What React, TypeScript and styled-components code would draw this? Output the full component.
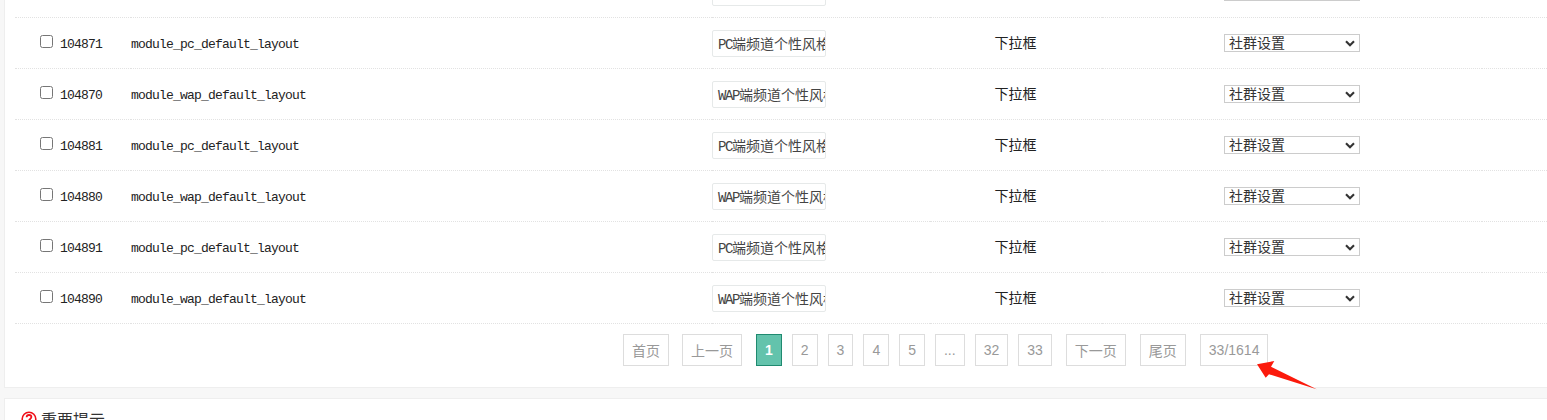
import React from "react";
import styled, { createGlobalStyle } from "styled-components";

const Global = createGlobalStyle`
  html, body { margin: 0; padding: 0; height: 420px; overflow: hidden; background: #f7f7f7; }
  * { box-sizing: border-box; }
`;

const Page = styled.div`
  position: relative;
  height: 420px;
  overflow: hidden;
  padding-left: 4px;
  font-family: "Liberation Sans", "Noto Sans CJK SC", sans-serif;
`;

const Panel = styled.section`
  margin-top: -33px;
  background: #fff;
  border: 1px solid #eeeeee;
  border-top: 0;
  border-right: 0;
  padding: 0 0 21px 10px;
`;

const Row = styled.div`
  display: grid;
  grid-template-columns: 116px 581px 218px 172px 380px 1fr;
  height: 51px;
`;

const Cell = styled.div<{ $center?: boolean }>`
  display: flex;
  align-items: center;
  justify-content: ${(p) => (p.$center ? "center" : "flex-start")};
  height: 51px;
  border-bottom: 1px dotted #e2e2e2;
`;

const IdCell = styled(Cell)`
  padding-left: 25px;
`;

const Check = styled.input`
  width: 13px;
  height: 13px;
  margin: -3px 7px 0 0;
`;

const Mono = styled.span`
  margin-top: 3px;
  font-family: "Liberation Mono", "Noto Sans CJK SC", monospace;
  font-size: 13px;
  letter-spacing: -0.8px;
  color: #222;
`;

const TitleField = styled.div`
  width: 114px;
  height: 27px;
  padding-left: 5px;
  overflow: hidden;
  white-space: nowrap;
  border: 1px solid #e6e9e9;
  border-radius: 2px;
  background: #fff;
  color: #444;
  font-family: "Noto Sans CJK SC", sans-serif;
  font-size: 14px;
  line-height: 24px;
`;

const TitleLatin = styled.span`
  font-family: "Liberation Mono", monospace;
  font-size: 14px;
  letter-spacing: -1.4px;
`;

const Kind = styled.span`
  margin-top: -3px;
  margin-left: -1px;
  font-family: "Noto Sans CJK SC", sans-serif;
  font-size: 14px;
  line-height: 18px;
  color: #222;
`;

const GroupBox = styled.div`
  display: flex;
  align-items: center;
  justify-content: space-between;
  width: 136px;
  height: 18px;
  padding: 0 4px 2px 4px;
  border: 1px solid #cccccc;
  background: #fff;
  color: #333;
  font-family: "Noto Sans CJK SC", sans-serif;
  font-size: 14px;
  line-height: 14px;
`;

const ChevronIcon = styled.svg`
  margin-top: 2px;
`;

const Pager = styled.nav`
  display: flex;
  gap: 10px;
  margin-top: 10px;
  padding-left: 608px;
`;

const PageLink = styled.a<{ $active?: boolean; $before?: number; $after?: number }>`
  display: flex;
  align-items: center;
  justify-content: center;
  height: 32px;
  padding: 0 8px;
  border: 1px solid ${(p) => (p.$active ? "#1f8a70" : "#dddddd")};
  background: ${(p) => (p.$active ? "#63c3ac" : "#fff")};
  color: ${(p) => (p.$active ? "#fff" : "#999")};
  font-weight: ${(p) => (p.$active ? 700 : 400)};
  font-size: 14px;
  margin-left: ${(p) => p.$before ?? 0}px;
  margin-right: ${(p) => p.$after ?? 0}px;
  white-space: nowrap;
`;

const Notice = styled.section`
  margin-top: 10px;
  height: 60px;
  background: #fff;
  border: 1px solid #eeeeee;
  border-right: 0;
  padding: 12px 0 0 16px;
`;

const NoticeTitle = styled.h3`
  display: flex;
  align-items: center;
  gap: 4px;
  margin: 0;
  font-family: "Noto Sans CJK SC", sans-serif;
  font-size: 16px;
  font-weight: 400;
  line-height: 16px;
  color: #333;
`;

const Arrow = styled.svg`
  position: absolute;
  left: 1250px;
  top: 355px;
`;

const rows: [number, string, string, string][] = [
  [104871, "module_pc_default_layout", "PC", "端频道个性风格"],
  [104870, "module_wap_default_layout", "WAP", "端频道个性风格"],
  [104881, "module_pc_default_layout", "PC", "端频道个性风格"],
  [104880, "module_wap_default_layout", "WAP", "端频道个性风格"],
  [104891, "module_pc_default_layout", "PC", "端频道个性风格"],
  [104890, "module_wap_default_layout", "WAP", "端频道个性风格"],
];

const Chevron = () => (
  <ChevronIcon width="10" height="7" viewBox="0 0 10 7" fill="none">
    <path d="M1 1.2 5 5.2 9 1.2" stroke="#333" strokeWidth="2.1" />
  </ChevronIcon>
);

export default function App() {
  return (
    <Page>
      <Global />
      <Panel>
        <Row>
          <Cell />
          <Cell />
          <Cell>
            <TitleField />
          </Cell>
          <Cell $center />
          <Cell $center>
            <GroupBox />
          </Cell>
          <Cell />
        </Row>
        {rows.map(([id, name, latin, title]) => (
          <Row key={id}>
            <IdCell>
              <Check type="checkbox" />
              <Mono>{id}</Mono>
            </IdCell>
            <Cell>
              <Mono>{name}</Mono>
            </Cell>
            <Cell>
              <TitleField>
                <TitleLatin>{latin}</TitleLatin>
                {title}
              </TitleField>
            </Cell>
            <Cell $center>
              <Kind>下拉框</Kind>
            </Cell>
            <Cell $center>
              <GroupBox>
                社群设置
                <Chevron />
              </GroupBox>
            </Cell>
            <Cell />
          </Row>
        ))}
        <Pager>
          <PageLink $after={3}>首页</PageLink>
          <PageLink $after={4}>上一页</PageLink>
          <PageLink $active>1</PageLink>
          <PageLink>2</PageLink>
          <PageLink>3</PageLink>
          <PageLink>4</PageLink>
          <PageLink>5</PageLink>
          <PageLink>...</PageLink>
          <PageLink>32</PageLink>
          <PageLink>33</PageLink>
          <PageLink $before={4}>下一页</PageLink>
          <PageLink $before={4}>尾页</PageLink>
          <PageLink $before={4}>33/1614</PageLink>
        </Pager>
      </Panel>
      <Notice>
        <NoticeTitle>
          <svg width="16" height="16" viewBox="0 0 16 16" fill="none">
            <circle cx="8" cy="8" r="6.8" stroke="#f0101a" strokeWidth="1.6" />
            <path
              d="M5.6 6.2C5.7 4.8 6.7 4 8 4c1.4 0 2.4.8 2.4 2 0 1.9-2.4 1.9-2.4 3.6"
              stroke="#f0101a"
              strokeWidth="1.8"
            />
            <rect x="7.1" y="10.7" width="1.8" height="1.8" fill="#f0101a" />
          </svg>
          重要提示
        </NoticeTitle>
      </Notice>
      <Arrow width="75" height="40" viewBox="0 0 75 40">
        <polygon points="7,9.3 24.3,6 21,11.7 66.7,34.3 19,19.3 15.7,22.7" fill="#fb1a0c" />
      </Arrow>
    </Page>
  );
}
